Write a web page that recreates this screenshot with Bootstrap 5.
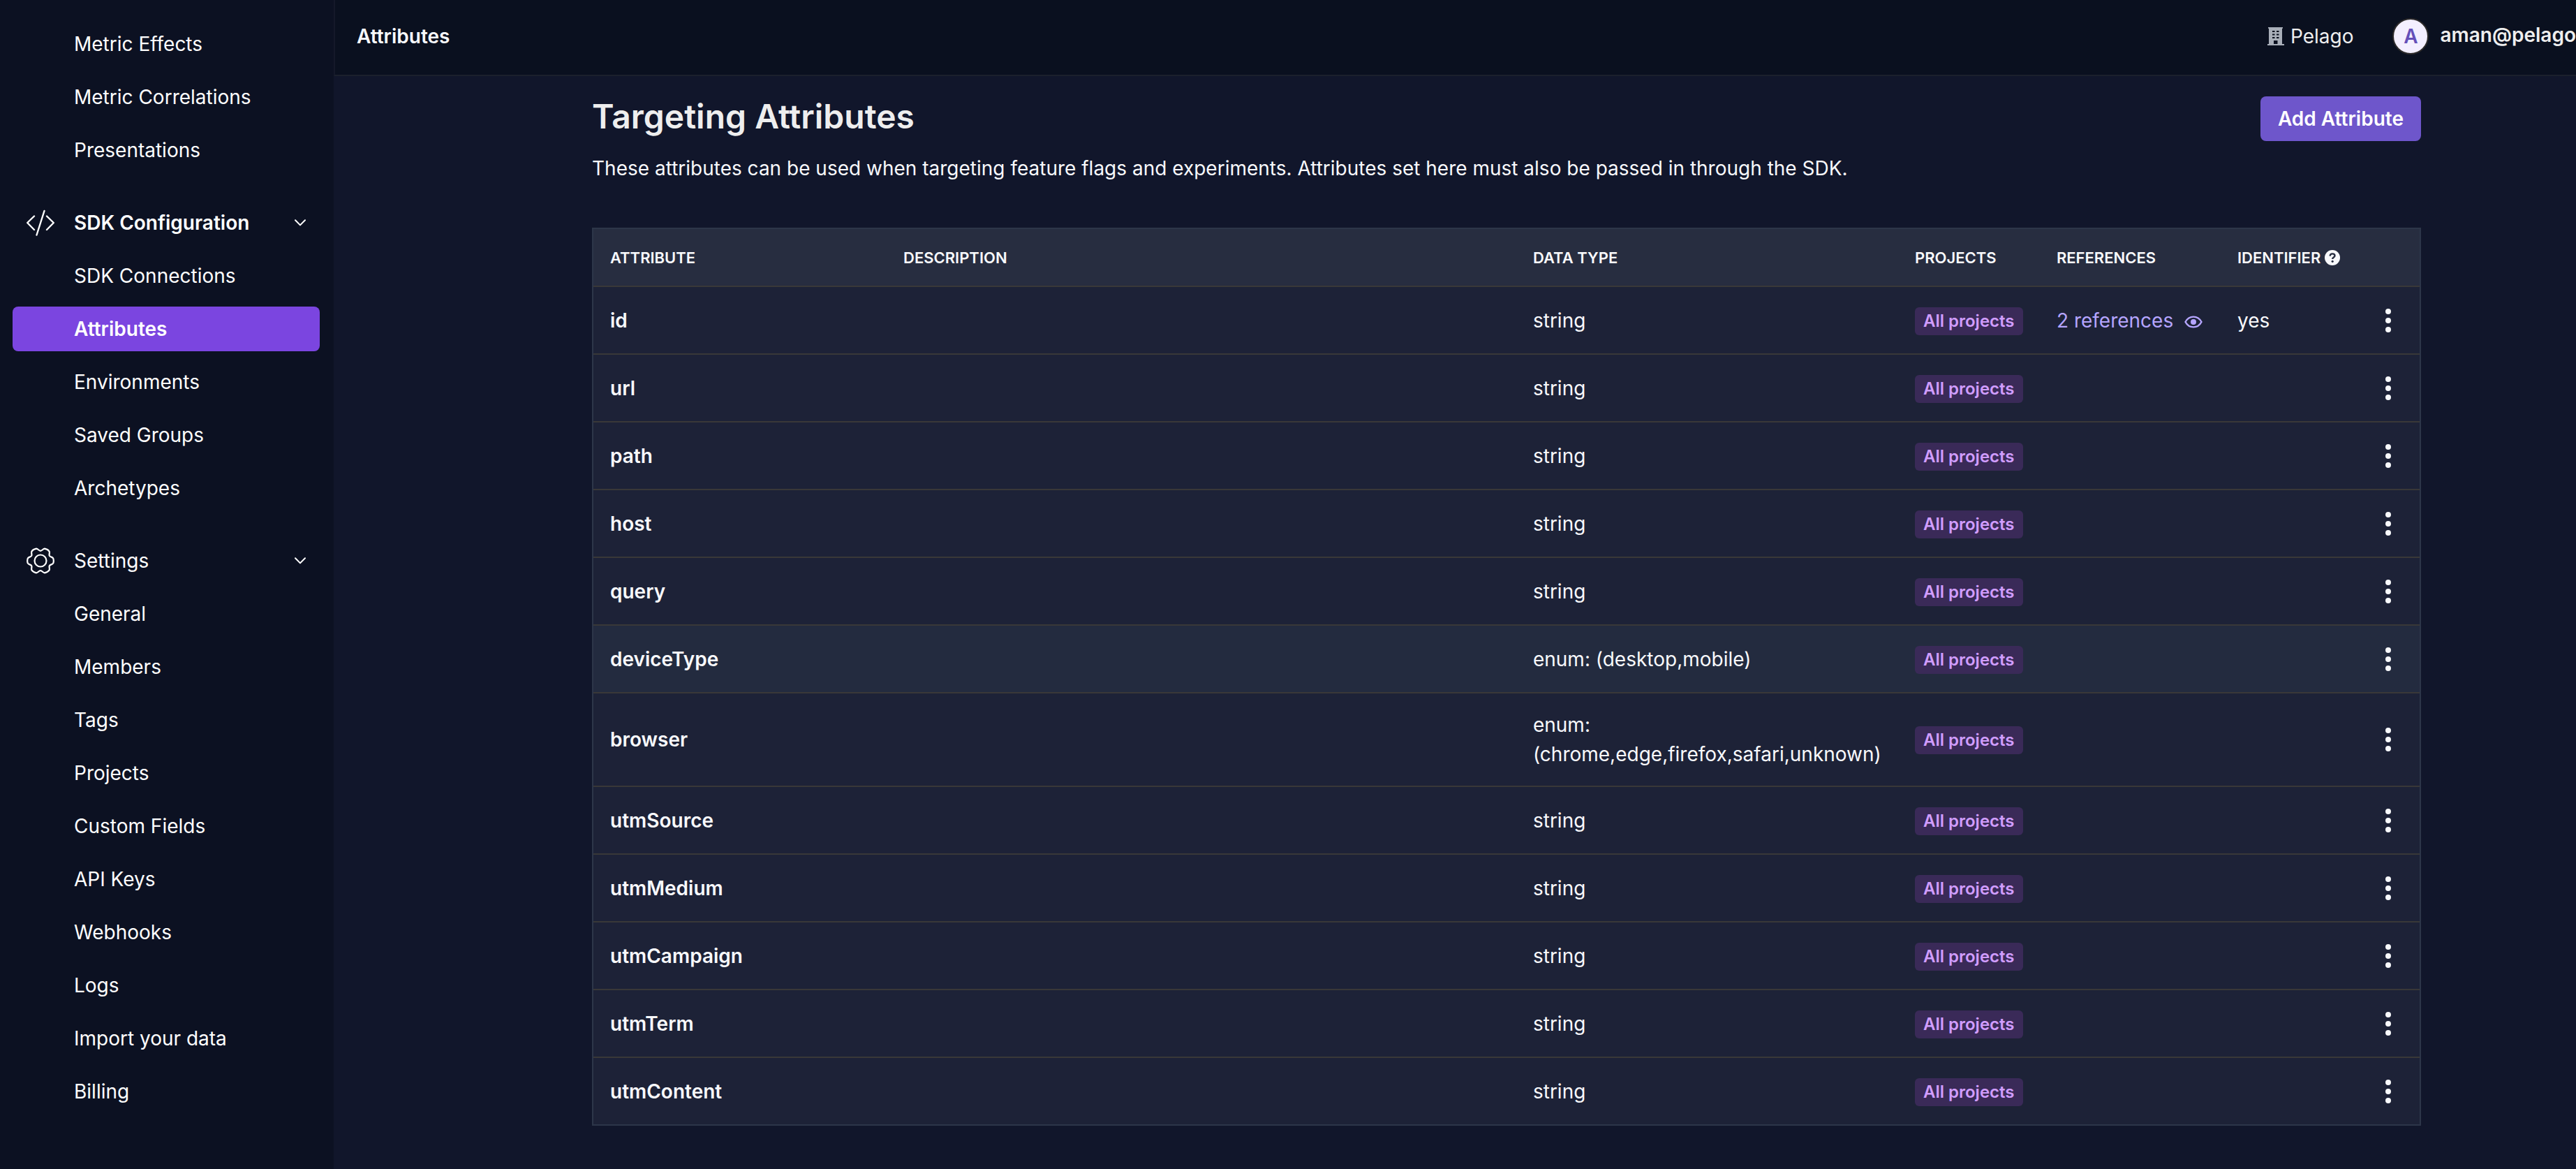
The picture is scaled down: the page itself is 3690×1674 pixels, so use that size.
<!DOCTYPE html>
<html lang="en">
<head>
<meta charset="utf-8">
<meta name="viewport" content="width=device-width, initial-scale=1">
<title>Attributes</title>
<link href="https://cdn.jsdelivr.net/npm/bootstrap@5.3.0/dist/css/bootstrap.min.css" rel="stylesheet">
<style>
body{font-family:Inter,"Liberation Sans",sans-serif;font-size:28px;line-height:42px;color:#f8f9fc;background:#11162b}
a{text-decoration:none}
.side-nav{width:478px;background:#0c1122;padding:31px 20px 0 18px}
.side-group{display:flex;flex-direction:column;gap:12px;margin-bottom:40px}
.side-item{display:flex;align-items:center;height:64px;padding:0 20px 0 88px;border-radius:8px;color:#fff;background:none;border:0;text-align:left}
.side-item.current{background:#7b45e0;font-weight:600}
.side-head{padding-left:20px;gap:28px}
.side-head.open-page{font-weight:600}
.top-bar{height:109px;padding:0 0 4px 31px;background:#0a101f;border-left:2px solid #15192a;border-bottom:2px solid #1b202c;white-space:nowrap}
.org-name,.user-mail{color:#eee}
.user-menu{margin-left:56px;font-size:28px;line-height:42px}
.avatar{width:52px;height:52px;border:2px solid #2c2a2a;background:#f3efff;color:#6550b9;font-weight:600}
.page-body{padding:29px 222px 60px 370px}
.page-title{font-size:48px;line-height:58px;font-weight:600;color:#eee;margin:0}
.page-intro{margin:18px 0 64px}
.btn-add{height:64px;padding:0 25px;border:0;border-radius:8px;background:#6e56cb;color:#fff;font-size:28px;font-weight:600;line-height:42px}
.btn-add:hover{background:#7b64d6;color:#fff}
.attr-box{border:2px solid #2d3649}
.attr-table{table-layout:fixed;border-collapse:separate;border-spacing:0;width:100%}
.attr-table th,.attr-table td{padding:0 24px;vertical-align:middle;white-space:nowrap}
.attr-table thead th{height:81px;background:#272d40;font-size:22px;font-weight:600}
.attr-table tbody th,.attr-table tbody td{height:97px;border-top:2px solid #393838;background:#1d2237}
.attr-table tbody th{font-weight:600}
.attr-table tbody td.multi{white-space:normal;padding-top:24px;padding-bottom:24px}
.attr-table tbody tr.hovered>*,.attr-table tbody tr:hover>*{background:#232b3f}
.help-label{display:flex;align-items:center;gap:6px}
.tag-all{display:block;width:fit-content;height:40px;padding:0 12px;border-radius:6px;background:#3a2a58;color:#d19dff;font-size:24px;line-height:40px;font-weight:600;margin-top:2px}
.ref-link{color:#b5a5ff}
.row-menu{display:block;width:42px;height:42px;padding:0;border:0;background:none;color:#f8f9fc}
</style>
<script src="https://cdn.jsdelivr.net/npm/bootstrap@5.3.0/dist/js/bootstrap.bundle.min.js"></script>
</head>
<body>
<svg class="d-none" aria-hidden="true">
  <symbol id="i-dots" viewBox="0 0 42 42"><g fill="currentColor"><circle cx="21" cy="8" r="4"/><circle cx="21" cy="21" r="4"/><circle cx="21" cy="34" r="4"/></g></symbol>
  <symbol id="i-down" viewBox="0 0 16 10"><path d="M1 1.2 8 8.4 15 1.2" fill="none" stroke="currentColor" stroke-width="2" stroke-linecap="round" stroke-linejoin="round"/></symbol>
</svg>
<div class="d-flex min-vh-100 overflow-hidden">
  <nav class="side-nav flex-shrink-0" aria-label="Main">
    <div class="side-group">
      <a class="side-item" href="#">Metric Effects</a>
      <a class="side-item" href="#">Metric Correlations</a>
      <a class="side-item" href="#">Presentations</a>
    </div>
    <div class="side-group">
      <button class="side-item side-head open-page" type="button">
        <svg width="40" height="38" viewBox="0 0 40 38" fill="none" stroke="currentColor" stroke-width="2.400" stroke-linecap="round" stroke-linejoin="round"><path d="M11 9.500 1.200 19l9.800 10M29 9.500 38.800 19 29 29M25.500 2 14.500 36.500"/></svg>
        <span>SDK Configuration</span>
        <svg class="ms-auto" width="16" height="10"><use href="#i-down"/></svg>
      </button>
      <a class="side-item" href="#">SDK Connections</a>
      <a class="side-item current" href="#" aria-current="page">Attributes</a>
      <a class="side-item" href="#">Environments</a>
      <a class="side-item" href="#">Saved Groups</a>
      <a class="side-item" href="#">Archetypes</a>
    </div>
    <div class="side-group mb-0">
      <button class="side-item side-head" type="button">
        <svg width="40" height="38" viewBox="0 0 40 38" fill="none" stroke="currentColor" stroke-width="2.200" stroke-linejoin="round"><circle cx="20" cy="19" r="8.500"/><path d="M20 4.800C22.500 4.800 23.500 1.700 26 1.700C29 2.300 31.500 4 32.600 5.600C33.500 8 32 10 32.800 11.700C34 14 37 13.200 38.200 15.500C39 18 39 20.500 38.200 22.500C37 24.800 34 24 32.800 26.300C32 28 33.500 30 32.600 32.400C31.500 34 29 35.700 26 36.300C23.500 36.300 22.500 33.200 20 33.200C17.500 33.200 16.500 36.300 14 36.300C11 35.700 8.500 34 7.400 32.400C6.500 30 8 28 7.200 26.300C6 24 3 24.800 1.800 22.500C1 20.500 1 18 1.800 15.500C3 13.200 6 14 7.200 11.700C8 10 6.500 8 7.400 5.600C8.500 4 11 2.300 14 1.700C16.500 1.700 17.500 4.800 20 4.800Z"/></svg>
        <span>Settings</span>
        <svg class="ms-auto" width="16" height="10"><use href="#i-down"/></svg>
      </button>
      <a class="side-item" href="#">General</a>
      <a class="side-item" href="#">Members</a>
      <a class="side-item" href="#">Tags</a>
      <a class="side-item" href="#">Projects</a>
      <a class="side-item" href="#">Custom Fields</a>
      <a class="side-item" href="#">API Keys</a>
      <a class="side-item" href="#">Webhooks</a>
      <a class="side-item" href="#">Logs</a>
      <a class="side-item" href="#">Import your data</a>
      <a class="side-item" href="#">Billing</a>
    </div>
  </nav>
  <div class="flex-grow-1">
    <header class="top-bar d-flex align-items-center">
      <span class="fw-semibold">Attributes</span>
      <div class="org-name ms-auto d-flex align-items-center">
        <svg class="me-2" width="26" height="28" viewBox="0 0 26 28"><path fill="#a9afb9" fill-rule="evenodd" d="M2 1h21v1.800h-1V25h3v2H1v-2h2V2.800H2ZM8 6v2h3.500V6Zm6 0v2h3.500V6Zm-6 4.500v2h3.500v-2Zm6 0v2h3.500v-2ZM8 15v2h3.500v-2Zm6 0v2h3.500v-2ZM10 20v5h5.500v-5Z"/></svg>
        <span>Pelago</span>
      </div>
      <button class="btn user-menu p-0 border-0 d-flex align-items-center" type="button">
        <span class="avatar rounded-circle d-flex align-items-center justify-content-center">A</span>
        <span class="user-mail fw-semibold ms-3 pb-1">aman@pelago</span>
      </button>
    </header>
    <main class="page-body">
      <div class="d-flex justify-content-between align-items-start">
        <h1 class="page-title">Targeting Attributes</h1>
        <button class="btn btn-add" type="button">Add Attribute</button>
      </div>
      <p class="page-intro">These attributes can be used when targeting feature flags and experiments. Attributes set here must also be passed in through the SDK.</p>
      <div class="attr-box">
        <table class="attr-table">
          <colgroup><col style="width:420px"><col><col style="width:547px"><col style="width:203px"><col style="width:259px"><col style="width:195px"><col style="width:90px"></colgroup>
          <thead>
            <tr><th scope="col">ATTRIBUTE</th><th scope="col">DESCRIPTION</th><th scope="col">DATA TYPE</th><th scope="col">PROJECTS</th><th scope="col">REFERENCES</th>
              <th scope="col"><span class="help-label">IDENTIFIER <svg class="flex-shrink-0" width="22" height="22" viewBox="0 0 22 22"><circle cx="11" cy="11" r="11" fill="#f8f9fc"/><path d="M7.600 8.600C7.800 6.400 9.200 5.400 11.100 5.400C13 5.400 14.500 6.500 14.500 8.300C14.500 10.500 11.200 10.600 11.200 12.900" fill="none" stroke="#272d40" stroke-width="2.400"/><circle cx="11.200" cy="16.300" r="1.600" fill="#272d40"/></svg></span></th>
              <th></th></tr>
          </thead>
          <tbody>
            <tr><th scope="row">id</th><td></td><td>string</td><td><span class="tag-all">All projects</span></td><td><a class="ref-link d-flex align-items-center" href="#">2 references<svg class="ms-3 mt-1" width="26" height="18" viewBox="0 0 26 18"><path d="M1.500 9C4 4.200 8 1.600 13 1.600S22 4.200 24.500 9C22 13.800 18 16.400 13 16.400S4 13.800 1.500 9Z" fill="none" stroke="currentColor" stroke-width="2.400"/><circle cx="13" cy="9" r="4" fill="currentColor"/></svg></a></td><td>yes</td><td><button class="row-menu" type="button" aria-label="Row menu"><svg class="d-block" width="42" height="42"><use href="#i-dots"/></svg></button></td></tr>
            <tr><th scope="row">url</th><td></td><td>string</td><td><span class="tag-all">All projects</span></td><td></td><td></td><td><button class="row-menu" type="button" aria-label="Row menu"><svg class="d-block" width="42" height="42"><use href="#i-dots"/></svg></button></td></tr>
            <tr><th scope="row">path</th><td></td><td>string</td><td><span class="tag-all">All projects</span></td><td></td><td></td><td><button class="row-menu" type="button" aria-label="Row menu"><svg class="d-block" width="42" height="42"><use href="#i-dots"/></svg></button></td></tr>
            <tr><th scope="row">host</th><td></td><td>string</td><td><span class="tag-all">All projects</span></td><td></td><td></td><td><button class="row-menu" type="button" aria-label="Row menu"><svg class="d-block" width="42" height="42"><use href="#i-dots"/></svg></button></td></tr>
            <tr><th scope="row">query</th><td></td><td>string</td><td><span class="tag-all">All projects</span></td><td></td><td></td><td><button class="row-menu" type="button" aria-label="Row menu"><svg class="d-block" width="42" height="42"><use href="#i-dots"/></svg></button></td></tr>
            <tr class="hovered"><th scope="row">deviceType</th><td></td><td>enum: (desktop,mobile)</td><td><span class="tag-all">All projects</span></td><td></td><td></td><td><button class="row-menu" type="button" aria-label="Row menu"><svg class="d-block" width="42" height="42"><use href="#i-dots"/></svg></button></td></tr>
            <tr><th scope="row">browser</th><td></td><td class="multi">enum: (chrome,edge,firefox,safari,unknown)</td><td><span class="tag-all">All projects</span></td><td></td><td></td><td><button class="row-menu" type="button" aria-label="Row menu"><svg class="d-block" width="42" height="42"><use href="#i-dots"/></svg></button></td></tr>
            <tr><th scope="row">utmSource</th><td></td><td>string</td><td><span class="tag-all">All projects</span></td><td></td><td></td><td><button class="row-menu" type="button" aria-label="Row menu"><svg class="d-block" width="42" height="42"><use href="#i-dots"/></svg></button></td></tr>
            <tr><th scope="row">utmMedium</th><td></td><td>string</td><td><span class="tag-all">All projects</span></td><td></td><td></td><td><button class="row-menu" type="button" aria-label="Row menu"><svg class="d-block" width="42" height="42"><use href="#i-dots"/></svg></button></td></tr>
            <tr><th scope="row">utmCampaign</th><td></td><td>string</td><td><span class="tag-all">All projects</span></td><td></td><td></td><td><button class="row-menu" type="button" aria-label="Row menu"><svg class="d-block" width="42" height="42"><use href="#i-dots"/></svg></button></td></tr>
            <tr><th scope="row">utmTerm</th><td></td><td>string</td><td><span class="tag-all">All projects</span></td><td></td><td></td><td><button class="row-menu" type="button" aria-label="Row menu"><svg class="d-block" width="42" height="42"><use href="#i-dots"/></svg></button></td></tr>
            <tr><th scope="row">utmContent</th><td></td><td>string</td><td><span class="tag-all">All projects</span></td><td></td><td></td><td><button class="row-menu" type="button" aria-label="Row menu"><svg class="d-block" width="42" height="42"><use href="#i-dots"/></svg></button></td></tr>
          </tbody>
        </table>
      </div>
    </main>
  </div>
</div>
</body>
</html>
